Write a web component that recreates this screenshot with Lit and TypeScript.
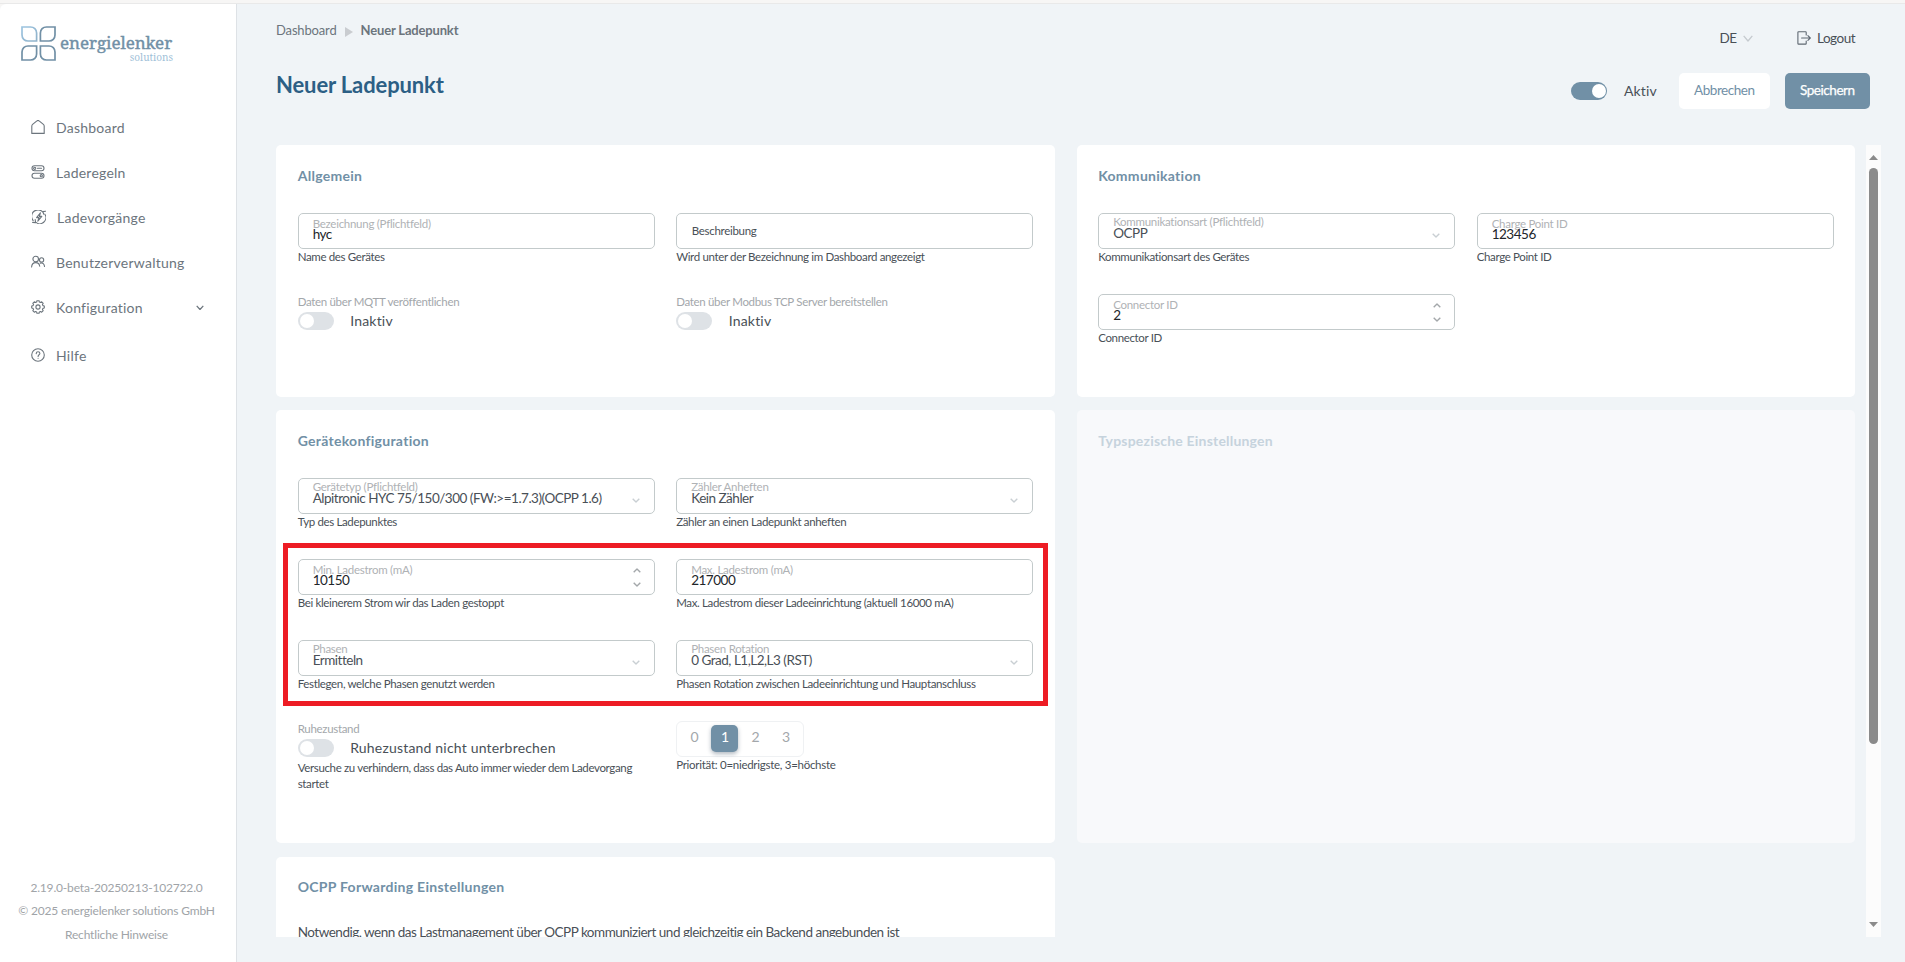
import { LitElement, html, css, svg, nothing, type TemplateResult } from "lit";
import { customElement, property } from "lit/decorators.js";
import { classMap } from "lit/directives/class-map.js";

const stroke = (size: number, width: number, body: unknown) => html`<svg
  width=${size} height=${size} viewBox="0 0 14 14" fill="none" stroke="currentColor"
  stroke-width=${width} stroke-linecap="round" stroke-linejoin="round">${body}</svg>`;

const chevronDown = (w: number, h: number, sw: number) => html`<svg width=${w} height=${h}
  viewBox="0 0 ${w} ${h}" fill="none" stroke="currentColor" stroke-width=${sw}
  stroke-linejoin="round"><path d="M0.7 0.8 L${w / 2} ${h - 1} L${w - 0.7} 0.8"></path></svg>`;

const chevronUp = (w: number, h: number, sw: number) => html`<svg width=${w} height=${h}
  viewBox="0 0 ${w} ${h}" fill="none" stroke="currentColor" stroke-width=${sw}
  stroke-linejoin="round"><path d="M0.7 ${h - 0.8} L${w / 2} 1 L${w - 0.7} ${h - 0.8}"></path></svg>`;

const gearPath = () => {
  const teeth = 8;
  let d = "";
  for (let i = 0; i < teeth; i++) {
    const base = (i * 2 * Math.PI) / teeth;
    const points: [number, number][] = [[-0.27, 5.1], [-0.17, 6.4], [0.17, 6.4], [0.27, 5.1]];
    for (const [offset, radius] of points) {
      const x = 7 + radius * Math.sin(base + offset);
      const y = 7 - radius * Math.cos(base + offset);
      d += `${d ? "L" : "M"}${x.toFixed(2)} ${y.toFixed(2)} `;
    }
  }
  return d + "Z";
};

const icons: Record<string, TemplateResult> = {
  home: stroke(14, 1.1, svg`<path d="M0.8 13.4V6.2C0.8 5.4 1 4.9 1.6 4.4L5.6 1.1C6.4 0.4 7.6 0.4 8.4 1.1L12.4 4.4C13 4.9 13.2 5.4 13.2 6.2V13.4Z"/>`),
  rules: stroke(14, 1.1, svg`<rect x="1" y="0.8" width="12" height="5" rx="2.5"/><circle cx="3.7" cy="3.3" r="1.1"/><path d="M6.5 3.3H10.5"/><rect x="1" y="8.2" width="12" height="5" rx="2.5"/><circle cx="10.3" cy="10.7" r="1.1"/>`),
  sessions: stroke(14, 1.1, svg`<path d="M1.2 10.6A6.2 6.2 0 0 1 10.8 2"/><path d="M12.9 4.2A6.2 6.2 0 0 1 3.6 12.2"/><path d="M0.6 12.4L3.6 12.6L3.2 9.6M13.6 1.2L10.8 1.6L11.8 4.2"/><path d="M8.4 2.9L4.6 7.6H7L5.8 11.2L9.8 6.4H7.4Z"/>`),
  users: stroke(14, 1.1, svg`<circle cx="4.7" cy="4" r="2.8"/><path d="M0.6 12C0.8 8.9 2.4 7.6 4.7 7.6S8.4 8.9 8.7 11.2"/><circle cx="10.6" cy="4.9" r="2.1"/><path d="M9.2 8.1C11.8 7.3 13.3 9 13.5 11.4"/>`),
  gear: stroke(14, 1.1, svg`<path d=${gearPath()}/><circle cx="7" cy="7" r="2.1"/>`),
  help: stroke(14, 1.1, svg`<circle cx="7" cy="7" r="6.3"/><path d="M5.2 5.6C5.3 4.4 6 3.8 7 3.8S8.9 4.5 8.9 5.5C8.9 6.8 7.1 6.8 7.1 8.4"/><path d="M7.1 10.2V10.3"/>`),
  logout: stroke(14, 1.1, svg`<path d="M9.2 4V1.4C9.2 1 9 0.8 8.6 0.8H1.6C1.1 0.8 0.9 1 0.9 1.4V12.4C0.9 12.9 1.1 13.1 1.6 13.1H8.6C9 13.1 9.2 12.9 9.2 12.4V10"/><path d="M4.6 7H13.2M10.9 4.6L13.3 7L10.9 9.4"/>`),
};

@customElement("form-field")
export class FormField extends LitElement {
  static styles = css`
    :host { display: block; height: 81px; }
    .box {
      box-sizing: border-box; height: 36px; border: 1px solid #c3cacb; border-radius: 5px;
      background: #fff; display: flex; align-items: flex-start; padding: 0 12.5px 0 14px;
    }
    .texts { flex: 1; display: flex; flex-direction: column; white-space: nowrap; padding-top: 3.5px; }
    .label { font-size: 11.5px; letter-spacing: -0.28px; line-height: 12px; color: #afb2b5; }
    .value { font-size: 13.5px; letter-spacing: -0.49px; line-height: 14px; margin-top: -2.5px; color: #212529; }
    .select .texts { padding-top: 2px; }
    .select .value { color: #495057; margin-top: -2px; }
    .placeholder { font-size: 11.5px; letter-spacing: -0.3px; line-height: 34px; color: #495057; padding-left: 0.5px; }
    .arrow { color: #c9cfd3; display: flex; padding: 18.5px 1.5px 0 0; }
    .spin { color: #a3a7aa; display: flex; flex-direction: column; gap: 9px; padding: 8px 0.5px 0 0; }
    .hint { font-size: 11.5px; letter-spacing: -0.35px; line-height: 16px; color: #495057; white-space: nowrap; }
    svg { display: block; }
  `;
  @property() label = "";
  @property() value = "";
  @property() hint = "";
  @property() kind = "text";

  render() {
    return html`
      <div class=${classMap({ box: true, select: this.kind === "select" })}>
        ${this.value
          ? html`<div class="texts"><span class="label">${this.label}</span><span class="value">${this.value}</span></div>`
          : html`<span class="placeholder">${this.label}</span>`}
        ${this.kind === "select" ? html`<span class="arrow">${chevronDown(8, 5, 1.4)}</span>` : nothing}
        ${this.kind === "number"
          ? html`<span class="spin">${chevronUp(8, 5, 1.4)}${chevronDown(8, 5, 1.4)}</span>`
          : nothing}
      </div>
      <div class="hint">${this.hint}</div>
    `;
  }
}

@customElement("toggle-switch")
export class ToggleSwitch extends LitElement {
  static styles = css`
    :host { display: block; }
    .caption { font-size: 11.5px; letter-spacing: -0.32px; line-height: 16px; color: #a3a7ab; padding-bottom: 2px; }
    .line { display: flex; align-items: center; gap: 16.5px; }
    .track { width: 36px; height: 18px; border-radius: 9px; background: #dee2e6; display: flex; align-items: center; padding: 0 2px; box-sizing: border-box; }
    .track.on { background: #7190a6; justify-content: flex-end; padding: 0 1.5px; }
    .knob { width: 14px; height: 14px; border-radius: 50%; background: #fff; }
    .state { font-size: 14px; letter-spacing: 0.19px; line-height: 18px; color: #495057; }
  `;
  @property() caption = "";
  @property() state = "";
  @property({ type: Boolean }) on = false;

  render() {
    return html`
      ${this.caption ? html`<div class="caption">${this.caption}</div>` : nothing}
      <div class="line">
        <div class=${classMap({ track: true, on: this.on })}><div class="knob"></div></div>
        <div class="state">${this.state}</div>
      </div>
    `;
  }
}

@customElement("app-root")
export class AppRoot extends LitElement {
  static styles = css`
    :host {
      display: flex; flex-direction: column; height: 962px; overflow: hidden;
      background: #f7f6f5; font-family: Lato, "Liberation Sans", sans-serif; color: #495057;
    }
    svg { display: block; }
    .strip { height: 3px; flex: none; border-bottom: 1px solid #e9e9e9; }
    .shell { flex: 1; display: flex; min-height: 0; background: #f0f4f7; border-top-left-radius: 6px; overflow: hidden; }
    .sidebar { width: 236px; flex: none; background: #fff; border-right: 1px solid #dee2e6; display: flex; flex-direction: column; }
    .logo { display: flex; padding: 22px 0 0 21px; height: 79px; box-sizing: border-box; }
    .wordmark { display: flex; flex-direction: column; margin-left: 4px; width: 113px; font-family: "Noto Serif", "DejaVu Serif Condensed", "DejaVu Serif", serif; }
    .brand { font-size: 17px; line-height: 22px; letter-spacing: -0.06px; color: #7190a6; padding-top: 6px; -webkit-text-stroke: 0.4px #7190a6; }
    .sub { font-size: 10px; line-height: 10px; margin-top: -2px; color: #9fc1d8; align-self: flex-end; }
    .nav { display: flex; flex-direction: column; padding: 22px 0 0 31px; color: #6c757d; }
    .item { display: flex; align-items: center; height: 45px; font-size: 14px; letter-spacing: 0.24px; }
    .item:last-child { height: 51px; }
    .glyph { width: 25px; display: flex; padding-bottom: 1px; }
    .item.wide .glyph { width: 25px; padding: 0 0 2px 1px; }
    .more { margin-left: auto; padding-right: 32.5px; }
    .legal { margin-top: auto; padding: 0 3px 16px 0; text-align: center; font-size: 12px; letter-spacing: -0.18px; line-height: 23.5px; color: #a0a4a8; }

    .main { flex: 1; min-width: 0; display: flex; flex-direction: column; padding: 0 24px 25px 39px; }
    .head { height: 141px; flex: none; display: flex; justify-content: space-between; }
    .crumbs { display: flex; align-items: center; height: 18px; padding-top: 17px; font-size: 13px; letter-spacing: -0.15px; color: #6c757d; }
    .crumbs b { letter-spacing: -0.17px; }
    .tri { margin: 3px 8px 0 8px; color: #c9ccd0; }
    h1 { margin: 31.5px 0 0; font-size: 22px; line-height: 28px; font-weight: 700; letter-spacing: -0.13px; color: #2c5f85; }
    .tools { display: flex; flex-direction: column; padding-right: 11px; }
    .account { display: flex; justify-content: flex-end; align-items: center; height: 18px; padding: 25px 15px 0 0; font-size: 13.5px; letter-spacing: -0.5px; }
    .account .lang { margin: -1px 6.5px 0 0; }
    .account .arrow { color: #c5cacf; margin-right: 44px; }
    .account .exit { margin-right: 6px; color: #5f6872; }
    .account .leave { margin-top: -1px; }
    .actions { display: flex; align-items: center; padding-top: 26px; }
    .actions toggle-switch { margin-top: -1px; }
    .btn { height: 36px; border-radius: 5px; padding: 0 15px; font-size: 13.5px; letter-spacing: -0.45px; line-height: 34px; }
    .cancel { width: 61px; background: #fff; color: #7190a6; margin: 0 15px 0 22px; }
    .save { width: 55px; background: #7190a6; color: #fff; -webkit-text-stroke: 0.25px #fff; }

    .scroller { flex: 1; min-height: 0; display: flex; justify-content: space-between; }
    .grid { width: 1579px; display: grid; grid-template-columns: 778.5px 778.5px; column-gap: 22px; row-gap: 13.4px; grid-template-rows: 252px 433px 300px; overflow: hidden; }
    .card { background: #fff; border-radius: 5px; padding: 22px 21.7px 0; position: relative; }
    .card.muted { background: #f8f9fb; }
    .card.muted h2 { color: #c6d3dd; letter-spacing: 0.2px; }
    .card.last { padding-top: 21.2px; }
    h2 { margin: 0; font-size: 14px; line-height: 18px; letter-spacing: 0.28px; font-weight: 700; color: #7190a6; }
    .fields { display: grid; grid-template-columns: 357px 357px; column-gap: 21.5px; padding-top: 28px; }
    .pager { display: flex; align-items: center; height: 36px; box-sizing: border-box; width: 127.5px; border: 1px solid #eff1f3; border-radius: 6px; padding: 0 0 1px 2px; }
    .page { width: 30.5px; flex: none; display: flex; justify-content: center; font-size: 14px; color: #a3a7ab; }
    .page span { width: 27px; height: 27px; line-height: 24px; text-align: center; border-radius: 5px; }
    .page .current { background: #7190a6; color: #fff; box-shadow: 0 2px 4px rgba(60, 80, 100, 0.4); }
    .hint { font-size: 11.5px; letter-spacing: -0.35px; line-height: 16px; }
    .hint.priority { letter-spacing: -0.28px; }
    .note { margin: 27px 0 0; font-size: 13.5px; line-height: 18px; letter-spacing: -0.49px; white-space: nowrap; }
    .sleep .hint { padding-top: 3px; }
    .highlight { position: absolute; box-sizing: border-box; left: 7px; top: 133px; width: 765px; height: 163px; border: 5px solid #ed1c24; }
    .bar { width: 15px; background: #fcfcfc; display: flex; flex-direction: column; align-items: center; color: #8b8b8b; padding: 10px 0; box-sizing: border-box; }
    .thumb { width: 9px; height: 576px; border-radius: 4.5px; background: #8b8b8b; margin: 8px 0 auto; }
  `;

  private navItem(icon: string, text: string, more = false) {
    return html`<div class=${classMap({ item: true, wide: icon === "sessions" })}>
      <span class="glyph">${icons[icon]}</span><span>${text}</span>
      ${more ? html`<span class="more">${chevronDown(8, 5.5, 1.2)}</span>` : nothing}
    </div>`;
  }

  private logoMark() {
    const leaf = "M1 1H9.5C13 1 15.6 3.6 15.6 7V15H7C3.6 15 1 12.4 1 9Z";
    return html`<svg width="35" height="36" viewBox="0 0 35 36" fill="none" stroke="#7190a6" stroke-width="1.7">
      <defs><linearGradient id="sky" x1="0" y1="0" x2="1" y2="1">
        <stop offset="0" stop-color="#9cc4e0"></stop><stop offset="1" stop-color="#8fb2ca"></stop>
      </linearGradient></defs>
      <path d=${leaf} stroke="url(#sky)"></path>
      <path d=${leaf} transform="matrix(-1 0 0 1 35 0)"></path>
      <path d=${leaf} transform="matrix(1 0 0 -1 0 35)"></path>
      <path d=${leaf} transform="matrix(-1 0 0 -1 35 35)"></path>
    </svg>`;
  }

  render() {
    return html`
      <div class="strip"></div>
      <div class="shell">
        <aside class="sidebar">
          <div class="logo">${this.logoMark()}
            <div class="wordmark"><span class="brand">energielenker</span><span class="sub">solutions</span></div>
          </div>
          <nav class="nav">
            ${this.navItem("home", "Dashboard")}
            ${this.navItem("rules", "Laderegeln")}
            ${this.navItem("sessions", "Ladevorgänge")}
            ${this.navItem("users", "Benutzerverwaltung")}
            ${this.navItem("gear", "Konfiguration", true)}
            ${this.navItem("help", "Hilfe")}
          </nav>
          <div class="legal">
            <div>2.19.0-beta-20250213-102722.0</div>
            <div>© 2025 energielenker solutions GmbH</div>
            <div>Rechtliche Hinweise</div>
          </div>
        </aside>
        <main class="main">
          <header class="head">
            <div>
              <div class="crumbs"><span>Dashboard</span>
                <svg class="tri" width="8" height="10" viewBox="0 0 8 10" fill="currentColor"><path d="M0 0L8 5L0 10Z"></path></svg>
                <b>Neuer Ladepunkt</b></div>
              <h1>Neuer Ladepunkt</h1>
            </div>
            <div class="tools">
              <div class="account">
                <span class="lang">DE</span><span class="arrow">${chevronDown(10, 7, 1.3)}</span>
                <span class="exit">${icons.logout}</span><span class="leave">Logout</span>
              </div>
              <div class="actions">
                <toggle-switch on state="Aktiv"></toggle-switch>
                <div class="btn cancel">Abbrechen</div>
                <div class="btn save">Speichern</div>
              </div>
            </div>
          </header>
          <div class="scroller">
            <div class="grid">
              <section class="card">
                <h2>Allgemein</h2>
                <div class="fields">
                  <form-field label="Bezeichnung (Pflichtfeld)" value="hyc" hint="Name des Gerätes"></form-field>
                  <form-field label="Beschreibung" hint="Wird unter der Bezeichnung im Dashboard angezeigt"></form-field>
                  <toggle-switch caption="Daten über MQTT veröffentlichen" state="Inaktiv"></toggle-switch>
                  <toggle-switch caption="Daten über Modbus TCP Server bereitstellen" state="Inaktiv"></toggle-switch>
                </div>
              </section>
              <section class="card">
                <h2>Kommunikation</h2>
                <div class="fields">
                  <form-field kind="select" label="Kommunikationsart (Pflichtfeld)" value="OCPP" hint="Kommunikationsart des Gerätes"></form-field>
                  <form-field label="Charge Point ID" value="123456" hint="Charge Point ID"></form-field>
                  <form-field kind="number" label="Connector ID" value="2" hint="Connector ID"></form-field>
                </div>
              </section>
              <section class="card">
                <h2>Gerätekonfiguration</h2>
                <div class="fields">
                  <form-field kind="select" label="Gerätetyp (Pflichtfeld)" value="Alpitronic HYC 75/150/300 (FW:>=1.7.3)(OCPP 1.6)" hint="Typ des Ladepunktes"></form-field>
                  <form-field kind="select" label="Zähler Anheften" value="Kein Zähler" hint="Zähler an einen Ladepunkt anheften"></form-field>
                  <form-field kind="number" label="Min. Ladestrom (mA)" value="10150" hint="Bei kleinerem Strom wir das Laden gestoppt"></form-field>
                  <form-field label="Max. Ladestrom (mA)" value="217000" hint="Max. Ladestrom dieser Ladeeinrichtung (aktuell 16000 mA)"></form-field>
                  <form-field kind="select" label="Phasen" value="Ermitteln" hint="Festlegen, welche Phasen genutzt werden"></form-field>
                  <form-field kind="select" label="Phasen Rotation" value="0 Grad, L1,L2,L3 (RST)" hint="Phasen Rotation zwischen Ladeeinrichtung und Hauptanschluss"></form-field>
                  <div class="sleep">
                    <toggle-switch caption="Ruhezustand" state="Ruhezustand nicht unterbrechen"></toggle-switch>
                    <div class="hint">Versuche zu verhindern, dass das Auto immer wieder dem Ladevorgang startet</div>
                  </div>
                  <div>
                    <div class="pager">
                      ${[0, 1, 2, 3].map((n) => html`<div class="page"><span class=${classMap({ current: n === 1 })}>${n}</span></div>`)}
                    </div>
                    <div class="hint priority">Priorität: 0=niedrigste, 3=höchste</div>
                  </div>
                </div>
                <div class="highlight"></div>
              </section>
              <section class="card muted"><h2>Typspezische Einstellungen</h2></section>
              <section class="card last">
                <h2>OCPP Forwarding Einstellungen</h2>
                <p class="note">Notwendig, wenn das Lastmanagement über OCPP kommuniziert und gleichzeitig ein Backend angebunden ist</p>
              </section>
            </div>
            <div class="bar">
              <svg width="9" height="5" viewBox="0 0 9 5" fill="currentColor"><path d="M0 5L4.5 0L9 5Z"></path></svg>
              <div class="thumb"></div>
              <svg width="9" height="5" viewBox="0 0 9 5" fill="currentColor"><path d="M0 0L4.5 5L9 0Z"></path></svg>
            </div>
          </div>
        </main>
      </div>
    `;
  }
}
